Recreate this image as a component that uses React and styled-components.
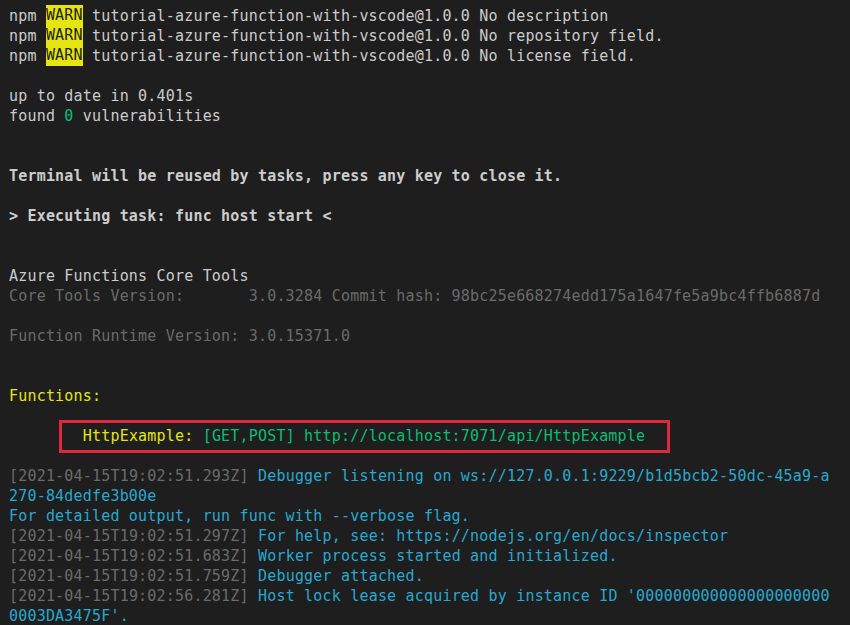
import React from "react";
import styled, { createGlobalStyle } from "styled-components";

const Global = createGlobalStyle`
  html, body { margin: 0; padding: 0; background: #1e1e1e; }
  body { width: 850px; height: 625px; overflow: hidden; }
`;

const Terminal = styled.div`
  box-sizing: border-box;
  width: 850px;
  height: 625px;
  background: #1e1e1e;
  padding: 6px 0 0 9px;
  font-family: "DejaVu Sans Mono", "Liberation Mono", monospace;
  font-size: 15px;
  letter-spacing: 0.19px;
  color: #cccccc;
  overflow: hidden;
`;

const Line = styled.div`
  position: relative;
  height: 20px;
  line-height: 20px;
  white-space: pre;
  font-weight: ${(p) => (p.$bold ? 700 : 400)};
`;

const colors = {
  grey: "#6b6b6b",
  green: "#0dbc79",
  yellow: "#e5e510",
  cyan: "#29a8d0",
};

const Span = styled.span`
  color: ${(p) => colors[p.$c] || "inherit"};
`;

const Warn = styled.span`
  display: inline-block;
  height: 21px;
  margin-top: -1px;
  vertical-align: top;
  line-height: 21px;
  background: #e5e510;
  color: #1e1e1e;
`;

const Highlight = styled.span`
  position: absolute;
  left: 50px;
  top: -6px;
  width: 611px;
  height: 33px;
  box-sizing: border-box;
  border: 3px solid #e0283c;
  pointer-events: none;
`;

const NpmWarn = ({ msg }) => (
  <Line>
    {"npm "}
    <Warn>WARN</Warn>
    {" tutorial-azure-function-with-vscode@1.0.0 " + msg}
  </Line>
);

const Log = ({ ts, children }) => (
  <Line>
    <Span $c="grey">[{ts}]</Span>
    <Span $c="cyan"> {children}</Span>
  </Line>
);

export default function App() {
  return (
    <>
      <Global />
      <Terminal>
        <NpmWarn msg="No description" />
        <NpmWarn msg="No repository field." />
        <NpmWarn msg="No license field." />
        <Line />
        <Line>up to date in 0.401s</Line>
        <Line>
          found <Span $c="green">0</Span> vulnerabilities
        </Line>
        <Line />
        <Line />
        <Line $bold>Terminal will be reused by tasks, press any key to close it.</Line>
        <Line />
        <Line $bold>{"> Executing task: func host start <"}</Line>
        <Line />
        <Line />
        <Line>Azure Functions Core Tools</Line>
        <Line>
          <Span $c="grey">
            {"Core Tools Version:       3.0.3284 Commit hash: 98bc25e668274edd175a1647fe5a9bc4ffb6887d"}
          </Span>
        </Line>
        <Line />
        <Line>
          <Span $c="grey">Function Runtime Version: 3.0.15371.0</Span>
        </Line>
        <Line />
        <Line />
        <Line>
          <Span $c="yellow">Functions:</Span>
        </Line>
        <Line />
        <Line>
          {"        "}
          <Span $c="yellow">HttpExample:</Span>
          <Span $c="green"> [GET,POST] http://localhost:7071/api/HttpExample</Span>
          <Highlight />
        </Line>
        <Line />
        <Log ts="2021-04-15T19:02:51.293Z">
          Debugger listening on ws://127.0.0.1:9229/b1d5bcb2-50dc-45a9-a
        </Log>
        <Line>
          <Span $c="cyan">270-84dedfe3b00e</Span>
        </Line>
        <Line>
          <Span $c="cyan">For detailed output, run func with --verbose flag.</Span>
        </Line>
        <Log ts="2021-04-15T19:02:51.297Z">
          For help, see: https://nodejs.org/en/docs/inspector
        </Log>
        <Log ts="2021-04-15T19:02:51.683Z">Worker process started and initialized.</Log>
        <Log ts="2021-04-15T19:02:51.759Z">Debugger attached.</Log>
        <Log ts="2021-04-15T19:02:56.281Z">
          Host lock lease acquired by instance ID '000000000000000000000
        </Log>
        <Line>
          <Span $c="cyan">0003DA3475F'.</Span>
        </Line>
      </Terminal>
    </>
  );
}
